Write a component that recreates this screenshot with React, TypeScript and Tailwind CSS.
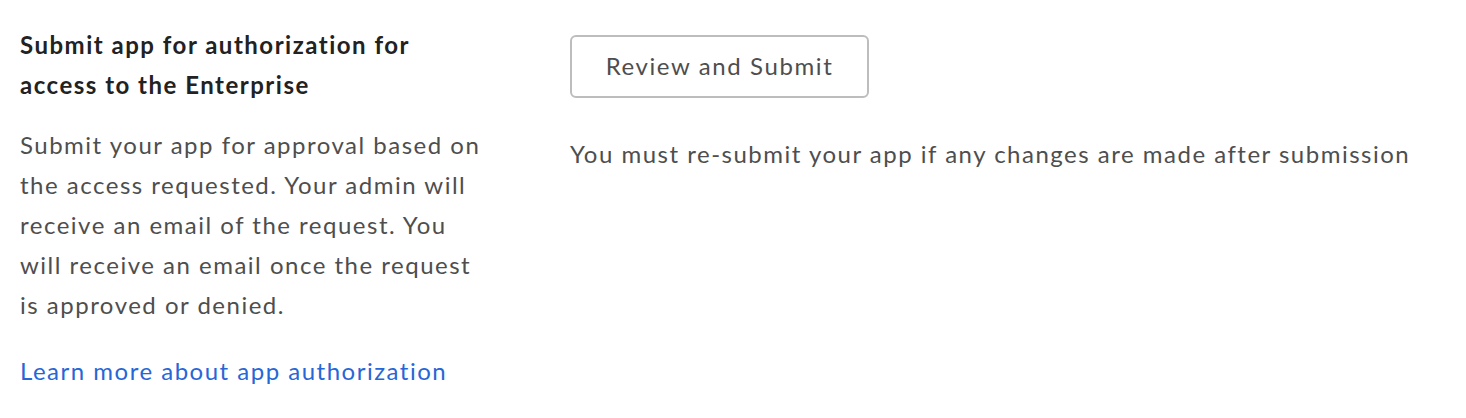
export default function App() {
  return (
    <div className="w-[1466px] h-[418px] bg-white font-['Lato',sans-serif] flex px-5 pt-[25px] tracking-[1.5px]">
      <div className="w-[470px] shrink-0">
        <h3 className="w-[420px] text-[24px] leading-[40px] font-bold text-[#222222] tracking-[1.5px]">
          Submit app for authorization for access to the Enterprise
        </h3>
        <p className="mt-[20px] text-[24px] leading-[40px] text-[#4e4e4e]">
          Submit your app for approval based on the access requested. Your admin will receive an email of the request. You will receive an email once the request is approved or denied.
        </p>
        <a href="#" className="block mt-[26px] text-[24px] leading-[40px] text-[#2766d6]">
          Learn more about app authorization
        </a>
      </div>
      <div className="ml-[80px] pt-[10px]">
        <button className="w-[299px] h-[63px] pb-[1px] border-2 border-[#bdbdbd] rounded-[6px] text-[24px] tracking-[1.6px] text-[#4e4e4e] bg-white">
          Review and Submit
        </button>
        <p className="mt-[36px] text-[24px] leading-[40px] text-[#4e4e4e]">
          You must re-submit your app if any changes are made after submission
        </p>
      </div>
    </div>
  );
}
